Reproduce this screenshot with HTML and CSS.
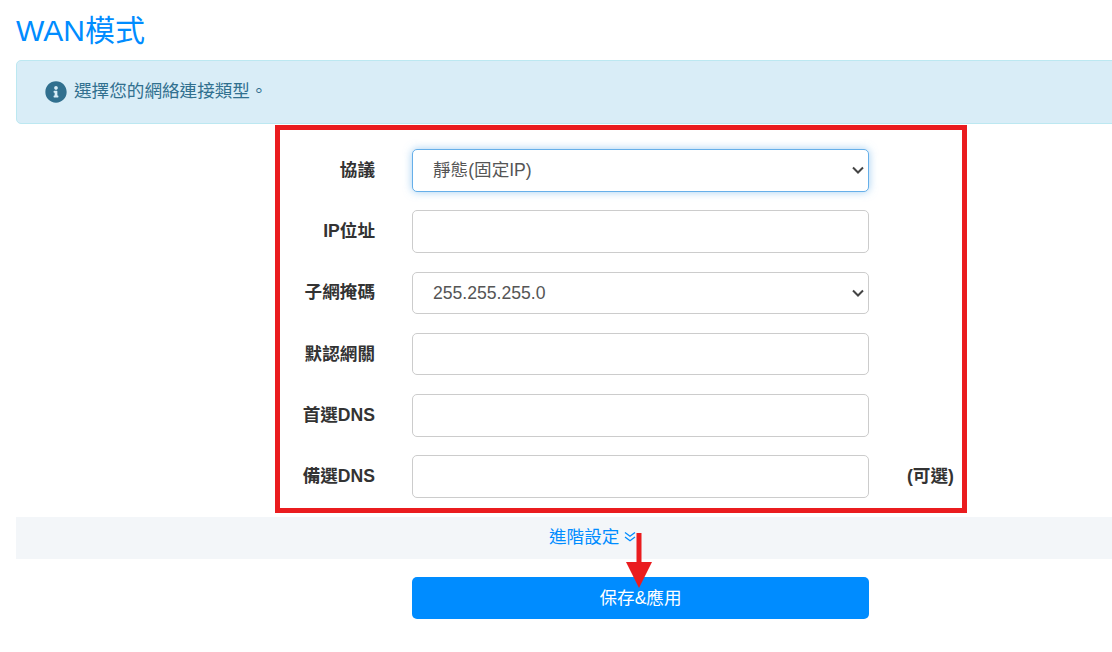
FILE: index.html
```html
<!DOCTYPE html>
<html lang="zh-Hant">
<head>
<meta charset="utf-8">
<title>WAN模式</title>
<link rel="stylesheet" href="styles.css">
</head>
<body>
<main class="page">
  <h1 class="title">WAN模式</h1>
  <div class="alert">
    <svg class="alert-icon" viewBox="0 0 512 512"><path fill="currentColor" d="M256 8C119 8 8 119.08 8 256c0 137 111 248 248 248s248-111 248-248C504 119.08 393 8 256 8zm0 110c23.2 0 42 18.8 42 42s-18.8 42-42 42-42-18.8-42-42 18.8-42 42-42zm56 254c0 6.6-5.4 12-12 12h-88c-6.6 0-12-5.4-12-12v-24c0-6.6 5.4-12 12-12h12v-64h-12c-6.6 0-12-5.4-12-12v-24c0-6.6 5.4-12 12-12h64c6.6 0 12 5.4 12 12v100h12c6.6 0 12 5.4 12 12v24z"/></svg>
    <span class="alert-text">選擇您的網絡連接類型。</span>
  </div>
  <form class="form-box">
    <div class="row">
      <label class="label">協議</label>
      <select class="control focused"><option>靜態(固定IP)</option></select>
    </div>
    <div class="row">
      <label class="label">IP位址</label>
      <input class="control" type="text">
    </div>
    <div class="row">
      <label class="label">子網掩碼</label>
      <select class="control"><option>255.255.255.0</option></select>
    </div>
    <div class="row">
      <label class="label">默認網關</label>
      <input class="control" type="text">
    </div>
    <div class="row">
      <label class="label">首選DNS</label>
      <input class="control" type="text">
    </div>
    <div class="row">
      <label class="label">備選DNS</label>
      <input class="control" type="text">
      <span class="note">(可選)</span>
    </div>
  </form>
  <div class="advanced">
    <a class="advanced-link">進階設定
      <svg class="chevrons" viewBox="0 0 12 12"><path d="M1 1.500l5 3.800 5-3.800M1 6l5 3.800L11 6" fill="none" stroke="currentColor" stroke-width="1.300"/></svg>
    </a>
  </div>
  <div class="actions">
    <button class="save" type="button">保存&amp;應用</button>
    <svg class="arrow" viewBox="0 0 26 55"><path fill="#ea1c1f" d="M10.500 0h5v29h10.500L13 55 0 29h10.500z"/></svg>
  </div>
</main>
</body>
</html>
```
FILE: styles.css
```css
* { box-sizing: border-box; }
html, body { margin: 0; height: 100%; overflow: hidden; background: #fff; }
body {
  font-family: "Liberation Sans", "Noto Sans CJK TC", sans-serif;
  font-size: 17.6px;
  color: #333;
}
.page { position: relative; width: 1130px; padding: 12px 0 0 16px; }
.title {
  margin: 0 0 11px;
  font-size: 30px;
  line-height: 37px;
  font-weight: 400;
  color: #008cff;
}
.alert {
  display: flex;
  align-items: center;
  gap: 7px;
  height: 64px;
  padding-left: 28px;
  background: #d9edf7;
  border: 1px solid #bce8f1;
  border-radius: 5px;
  color: #31708f;
}
.alert-icon { width: 22px; height: 22px; flex: none; }
.alert-text { padding-bottom: 5px; }
.form-box {
  width: 692px;
  margin: 1px 0 4px 259px;
  padding: 19px 0 10px;
  border: 5px solid #ea1c1f;
  display: flex;
  flex-direction: column;
  gap: 18.680px;
}
.row { display: flex; align-items: center; height: 42.600px; }
.label { width: 95px; padding-bottom: 4px; text-align: right; font-weight: 700; }
.control {
  display: block;
  width: 457px;
  height: 42.600px;
  margin-left: 37px;
  padding: 0 8px 0 20px;
  font: inherit;
  color: #555;
  background-color: #fff;
  border: 1px solid #ccc;
  border-radius: 5px;
  outline: 0;
}
select.control {
  appearance: none;
  background-image: url("data:image/svg+xml,%3Csvg xmlns='http://www.w3.org/2000/svg' viewBox='0 0 12 8'%3E%3Cpath d='M1 1.500l5 5 5-5' fill='none' stroke='%23444' stroke-width='2'/%3E%3C/svg%3E");
  background-repeat: no-repeat;
  background-position: right 4px center;
  background-size: 12px 8px;
}
.focused {
  border-color: #66afe9;
  box-shadow: 0 0 8px rgba(102, 175, 233, .6);
}
.note { margin-left: 38px; padding-bottom: 4px; font-weight: 700; white-space: nowrap; }
.advanced {
  height: 42px;
  padding-left: 533px;
  line-height: 41px;
  background: #f3f6f9;
}
.advanced-link { color: #008cff; white-space: nowrap; }
.chevrons { width: 12px; height: 12px; }
.actions { position: relative; padding: 18px 0 0 396px; }
.save {
  display: block;
  width: 457px;
  height: 42px;
  padding: 0 0 2px;
  font: inherit;
  color: #fff;
  background: #008cff;
  border: 0;
  border-radius: 5px;
}
.arrow { position: absolute; left: 610px; top: -26px; width: 26px; height: 55px; }
```
